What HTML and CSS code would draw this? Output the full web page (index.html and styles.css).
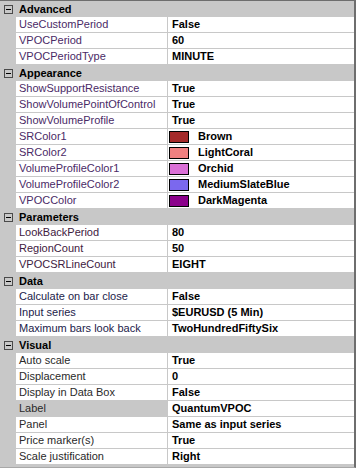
FILE: index.html
```html
<!DOCTYPE html>
<html>
<head>
<meta charset="UTF-8">
<title>Indicator properties</title>
<link rel="stylesheet" href="styles.css">
</head>
<body>
<div class="grid">

  <div class="cat"><span class="toggle"></span><span class="cat-name">Advanced</span></div>
  <div class="row custom"><span class="name">UseCustomPeriod</span><span class="value">False</span></div>
  <div class="row custom"><span class="name">VPOCPeriod</span><span class="value">60</span></div>
  <div class="row custom"><span class="name">VPOCPeriodType</span><span class="value">MINUTE</span></div>

  <div class="cat"><span class="toggle"></span><span class="cat-name">Appearance</span></div>
  <div class="row custom"><span class="name">ShowSupportResistance</span><span class="value">True</span></div>
  <div class="row custom"><span class="name">ShowVolumePointOfControl</span><span class="value">True</span></div>
  <div class="row custom"><span class="name">ShowVolumeProfile</span><span class="value">True</span></div>
  <div class="row custom"><span class="name">SRColor1</span><span class="value"><i class="swatch brown"></i>Brown</span></div>
  <div class="row custom"><span class="name">SRColor2</span><span class="value"><i class="swatch lightcoral"></i>LightCoral</span></div>
  <div class="row custom"><span class="name">VolumeProfileColor1</span><span class="value"><i class="swatch orchid"></i>Orchid</span></div>
  <div class="row custom"><span class="name">VolumeProfileColor2</span><span class="value"><i class="swatch slateblue"></i>MediumSlateBlue</span></div>
  <div class="row custom"><span class="name">VPOCColor</span><span class="value"><i class="swatch magenta"></i>DarkMagenta</span></div>

  <div class="cat"><span class="toggle"></span><span class="cat-name">Parameters</span></div>
  <div class="row params"><span class="name">LookBackPeriod</span><span class="value">80</span></div>
  <div class="row params"><span class="name">RegionCount</span><span class="value">50</span></div>
  <div class="row params"><span class="name">VPOCSRLineCount</span><span class="value">EIGHT</span></div>

  <div class="cat"><span class="toggle"></span><span class="cat-name">Data</span></div>
  <div class="row data"><span class="name">Calculate on bar close</span><span class="value">False</span></div>
  <div class="row data"><span class="name">Input series</span><span class="value">$EURUSD (5 Min)</span></div>
  <div class="row data"><span class="name">Maximum bars look back</span><span class="value">TwoHundredFiftySix</span></div>

  <div class="cat"><span class="toggle"></span><span class="cat-name">Visual</span></div>
  <div class="row"><span class="name">Auto scale</span><span class="value">True</span></div>
  <div class="row"><span class="name">Displacement</span><span class="value">0</span></div>
  <div class="row"><span class="name">Display in Data Box</span><span class="value">False</span></div>
  <div class="row selected"><span class="name">Label</span><span class="value">QuantumVPOC</span></div>
  <div class="row"><span class="name">Panel</span><span class="value">Same as input series</span></div>
  <div class="row"><span class="name">Price marker(s)</span><span class="value">True</span></div>
  <div class="row"><span class="name">Scale justification</span><span class="value">Right</span></div>

</div>
</body>
</html>
```

FILE: styles.css
```css
body {
    margin: 0;
    background: #ffffff;
    font-family: "Liberation Sans", Arial, sans-serif;
    font-size: 11px;
    color: #000000;
}

.grid {
    width: 354px;
    height: 466px;
    background: #c8c8c8;
    border-top: 1px solid #6e6e6e;
    border-right: 2px solid #6e6e6e;
    border-bottom: 1px solid #a8a8a8;
}

/* category header */
.cat {
    display: flex;
    align-items: center;
    height: 16px;
    background: #c8c8c8;
}
.toggle {
    position: relative;
    box-sizing: border-box;
    width: 9px;
    height: 9px;
    margin: 0 6px 0 4px;
    border: 1px solid #4a4a4a;
}
.toggle::after {
    content: "";
    position: absolute;
    left: 1px;
    top: 3px;
    width: 5px;
    height: 1px;
    background: #000000;
}
.cat-name {
    font-weight: bold;
    line-height: 16px;
}

/* property row */
.row {
    display: grid;
    grid-template-columns: 152px 1fr;
    height: 16px;
    margin-left: 16px;
    background: #ffffff;
}
.row span {
    box-sizing: border-box;
    height: 16px;
    line-height: 15px;
    border-bottom: 1px solid #c8c8c8;
    white-space: nowrap;
    overflow: hidden;
}
.name {
    padding-left: 3px;
    border-right: 1px solid #c8c8c8;
    color: #2a2a2a;
}
.custom .name {
    color: #4a2a66;
}
.params .name {
    color: #3e2040;
}
.data .name {
    color: #22224a;
}
.selected .name {
    background: #c8c8c8;
}
.value {
    display: flex;
    align-items: center;
    padding-left: 4px;
    font-weight: bold;
}

.swatch {
    box-sizing: border-box;
    width: 20px;
    height: 12px;
    margin: 0 9px 0 -3px;
    border: 1px solid #000000;
}
.brown { background: #a52a2a; }
.lightcoral { background: #f08080; }
.orchid { background: #da70d6; }
.slateblue { background: #7b68ee; }
.magenta { background: #8b008b; }
```
